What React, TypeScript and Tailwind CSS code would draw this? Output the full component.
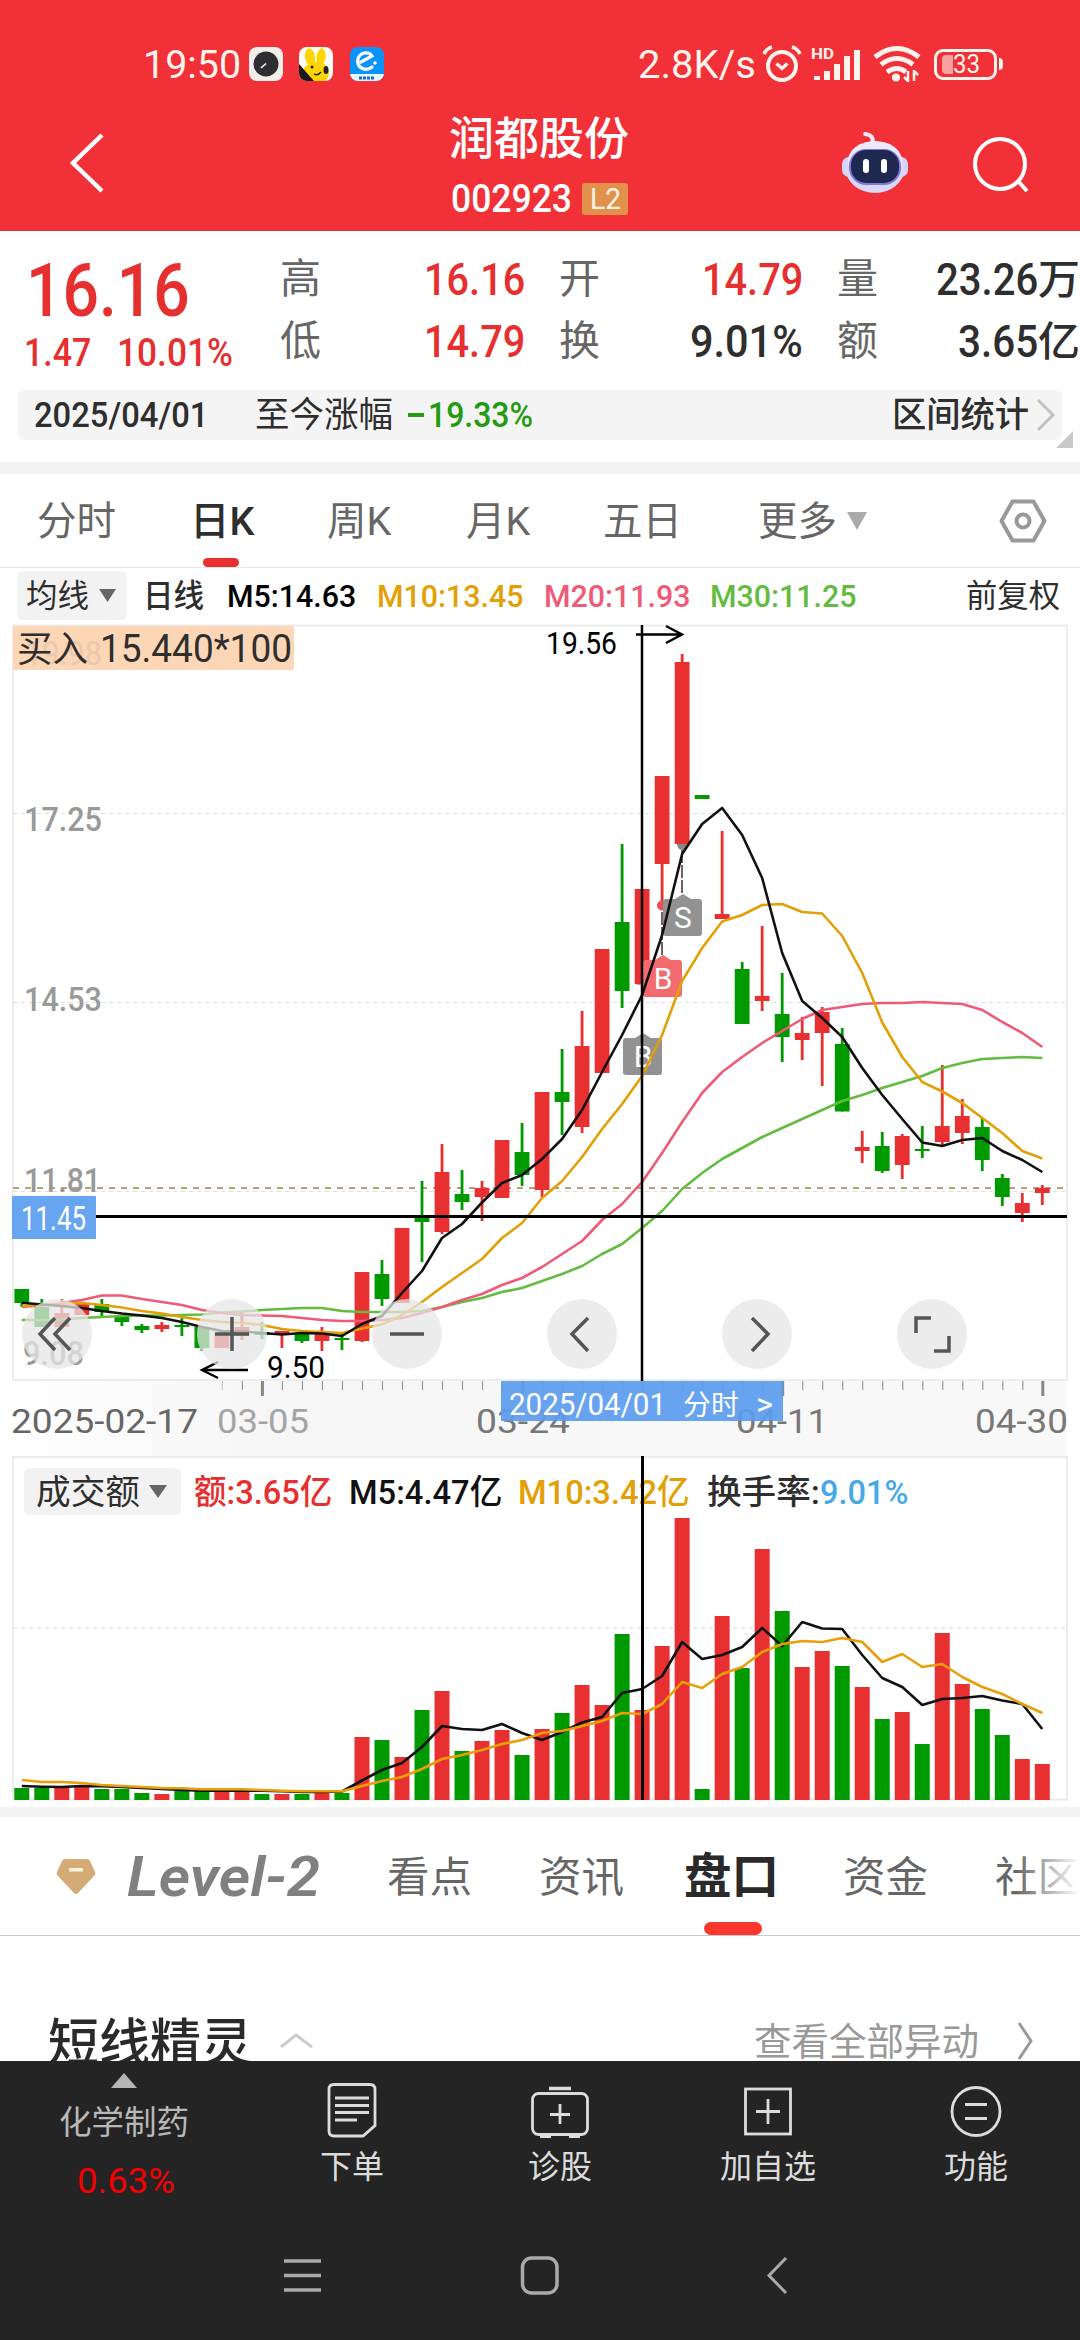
import { useLayoutEffect, useRef, useState, type ReactNode } from 'react';
import clsx from 'clsx';

const RED = '#e93030';
const GREEN = '#009900';

// [direction, high, body top, body bottom, low, turnover bar top]
type Candle = ['r' | 'g', number, number, number, number, number];

const candles: Candle[] = [
  ['g', 1289, 1289, 1303, 1307, 1788],
  ['g', 1299, 1307, 1327, 1327, 1788],
  ['r', 1299, 1313, 1327, 1328, 1787],
  ['r', 1304, 1304, 1315, 1315, 1787],
  ['g', 1299, 1304, 1312, 1317, 1789],
  ['g', 1315, 1316, 1322, 1326, 1789],
  ['g', 1324, 1326, 1330, 1333, 1793],
  ['r', 1322, 1325, 1329, 1332, 1794],
  ['g', 1316, 1325, 1327, 1336, 1791],
  ['g', 1327, 1327, 1348, 1351, 1791],
  ['r', 1333, 1333, 1348, 1348, 1791],
  ['r', 1312, 1327, 1336, 1340, 1791],
  ['g', 1322, 1332, 1335, 1339, 1794],
  ['r', 1331, 1331, 1335, 1348, 1794],
  ['g', 1333, 1333, 1341, 1343, 1794],
  ['r', 1327, 1333, 1341, 1351, 1793],
  ['g', 1333, 1338, 1340, 1350, 1793],
  ['r', 1272, 1272, 1341, 1342, 1737],
  ['g', 1260, 1274, 1299, 1306, 1740],
  ['r', 1228, 1228, 1303, 1303, 1757],
  ['g', 1181, 1217.5, 1222, 1262, 1710],
  ['r', 1144, 1172, 1232, 1234, 1691],
  ['g', 1170, 1194, 1202, 1210, 1751],
  ['r', 1181, 1188, 1197, 1221, 1741],
  ['r', 1140, 1140, 1198, 1198, 1730],
  ['g', 1123, 1152, 1175, 1186, 1755],
  ['r', 1092, 1092, 1190, 1197, 1729],
  ['g', 1049, 1092, 1102, 1135, 1713],
  ['r', 1011, 1046, 1127, 1133, 1685],
  ['r', 949, 949, 1073, 1073, 1705],
  ['g', 844, 922, 991, 1008, 1634],
  ['r', 889, 889, 984, 984, 1710],
  ['r', 776, 776, 864, 905, 1646],
  ['r', 654, 662, 844, 844, 1518],
  ['g', 795, 795, 799, 799, 1789],
  ['r', 831, 914, 919, 919, 1616],
  ['g', 962, 969, 1024, 1024, 1668],
  ['r', 926, 996, 1001, 1011, 1549],
  ['g', 973, 1014, 1037, 1062, 1611],
  ['r', 1017, 1033, 1040, 1060, 1667],
  ['r', 1007, 1012, 1033, 1086, 1651],
  ['g', 1028, 1044, 1111.5, 1111.5, 1666],
  ['r', 1131, 1147, 1151, 1163, 1687],
  ['g', 1132, 1146, 1171, 1173, 1719],
  ['r', 1134, 1136, 1165, 1179, 1712],
  ['g', 1126, 1149, 1151, 1158, 1744],
  ['r', 1065, 1126, 1142, 1146, 1633],
  ['r', 1099, 1116, 1133, 1144, 1684],
  ['g', 1118, 1127, 1160, 1171, 1709],
  ['g', 1174, 1178, 1197, 1206, 1735],
  ['r', 1193, 1203, 1213, 1222, 1759],
  ['r', 1185, 1188, 1193, 1205, 1764],
];

const ma5 = [
  1302.7, 1304.5, 1306, 1308, 1311, 1313.5, 1315.5, 1318, 1322, 1327, 1331, 1331.5, 1333, 1334.5, 1333, 1333.5, 1336, 1324, 1316,
  1293, 1271, 1238, 1224, 1202.5, 1183, 1175, 1159, 1139, 1110, 1072, 1035, 995, 935, 854, 824, 808, 835, 878, 953, 1001, 1018,
  1037, 1068, 1095, 1119, 1142.5, 1146, 1140, 1138, 1151, 1160, 1172,
];
const ma10 = [
  1306, 1305, 1304, 1303, 1305, 1307.5, 1311, 1313.5, 1317, 1320, 1322, 1323, 1325, 1329, 1331, 1332, 1333, 1328.5, 1324.5, 1315,
  1302, 1287, 1273, 1259, 1238, 1223, 1198, 1181, 1157, 1129, 1104, 1076, 1035, 981, 948, 921.5, 915, 905, 904, 912, 913.5, 936,
  973, 1022.5, 1057, 1082, 1091.5, 1103, 1118, 1133, 1151, 1158.5,
];
const ma20 = [
  1307, 1305.5, 1303, 1300, 1295.5, 1295.5, 1299, 1302, 1305, 1310, 1313, 1315, 1315.5, 1316, 1318, 1320, 1321, 1321, 1320, 1318,
  1313, 1307, 1300, 1294, 1285, 1278, 1267, 1254, 1241, 1220, 1204, 1182, 1153, 1122, 1093, 1072, 1057, 1043, 1031, 1019, 1010,
  1007, 1004, 1003, 1003, 1002, 1003, 1004, 1010, 1022, 1033, 1047,
];
const ma30 = [
  1320, 1320, 1319.5, 1318, 1317, 1316, 1315.5, 1315.5, 1315, 1314.5, 1312.5, 1311.5, 1310, 1309, 1308, 1308, 1311, 1312, 1312,
  1312, 1311, 1307, 1302, 1298, 1292, 1288, 1281, 1274, 1266, 1254, 1244, 1228, 1211, 1189, 1173, 1159, 1148, 1137, 1128, 1119,
  1110, 1101, 1095, 1088, 1082, 1076, 1068, 1063, 1059, 1058, 1057, 1058,
];
const turnoverMa5 = [
  1786, 1786.7, 1787, 1786, 1786.3, 1787, 1788, 1789, 1790, 1790.7, 1790.7, 1790.7, 1790.7, 1791.3, 1792, 1792, 1791.5, 1780.5,
  1770, 1763, 1747, 1726, 1729, 1730, 1724, 1733, 1740, 1732, 1722.5, 1717, 1693, 1689, 1676, 1642, 1659, 1655, 1647, 1628, 1646,
  1622, 1628.5, 1629, 1655, 1678, 1687, 1705, 1699, 1698, 1696, 1700.5, 1704, 1729,
];
const turnoverMa10 = [
  1780, 1782, 1782, 1783, 1785, 1786, 1787, 1788, 1788.3, 1789.3, 1789.3, 1789.3, 1790, 1790.7, 1791.3, 1791.3, 1791.3, 1786, 1781,
  1777, 1769, 1759, 1755, 1750, 1744, 1740, 1733, 1731, 1726, 1721, 1713, 1714, 1704, 1682, 1688, 1674, 1667, 1652, 1644, 1641,
  1642, 1638, 1642, 1662, 1654, 1667, 1664, 1677, 1687, 1694, 1704, 1713,
];

const xAt = (i: number) => 21.8 + i * 20.01;
const toPoints = (values: number[]) => values.map((y, i) => `${xAt(i)},${y}`).join(' ');

// Squeezes its text horizontally so that it fills exactly `w` pixels.
function Fit({ w, className, children }: { w: number; className?: string; children: ReactNode }) {
  const ref = useRef<HTMLSpanElement>(null);
  const [scale, setScale] = useState(1);

  useLayoutEffect(() => {
    if (ref.current) setScale(w / ref.current.offsetWidth);
  }, [w]);

  return (
    <span className={clsx('block shrink-0 leading-none', className)} style={{ width: w }}>
      <span ref={ref} className="inline-block origin-left whitespace-nowrap" style={{ transform: `scaleX(${scale})` }}>
        {children}
      </span>
    </span>
  );
}

function StatusBar() {
  return (
    <div className="flex h-[86px] items-end pl-[143px] text-[39px] text-[#fff3ee]">
      <div className="flex h-[44px] items-center">
        <Fit w={98} className="pt-[2px]">
          19:50
        </Fit>
        <svg className="ml-[8px] h-[34px] w-[34px]" viewBox="0 0 34 34">
          <rect width="34" height="34" rx="8" fill="#f1eeec" />
          <circle cx="17" cy="17" r="12.5" fill="#2e2e30" />
          <path d="M12 21l5-4.500" stroke="#fff" strokeWidth="1.600" />
        </svg>
        <svg className="ml-[16px] h-[34px] w-[34px]" viewBox="0 0 34 34">
          <clipPath id="rabbit">
            <rect width="34" height="34" rx="8" />
          </clipPath>
          <g clipPath="url(#rabbit)">
            <rect width="34" height="34" fill="#fdfdf6" />
            <ellipse cx="11" cy="10" rx="5" ry="8.500" fill="#ffd500" transform="rotate(-8 11 10)" />
            <ellipse cx="22" cy="10" rx="4.500" ry="8.500" fill="#ffd500" transform="rotate(8 22 10)" />
            <ellipse cx="17" cy="26" rx="13" ry="11" fill="#ffd500" />
            <path d="M0 17l15 17H0z" fill="#1a1a1a" />
            <circle cx="13" cy="20" r="1.500" fill="#222" />
            <path d="M15 27q4 2 7-2" stroke="#222" strokeWidth="1.500" fill="none" />
            <ellipse cx="27" cy="23" rx="2.500" ry="4" fill="#222" />
          </g>
        </svg>
        <svg className="ml-[17px] h-[34px] w-[34px]" viewBox="0 0 34 34">
          <clipPath id="eleme">
            <rect width="34" height="34" rx="8" />
          </clipPath>
          <g clipPath="url(#eleme)">
            <rect width="34" height="34" fill="#0a93fb" />
            <rect y="27" width="34" height="7" fill="#e9f5ff" />
            <path d="M11 15l11-6c-3-5-12-4-14 3-2 9 8 13 14 8" fill="none" stroke="#fff" strokeWidth="3.200" strokeLinecap="round" />
            <circle cx="25" cy="16" r="1.800" fill="#fff" />
            <path d="M9 31h16" stroke="#0a70d8" strokeWidth="3" strokeDasharray="3 1" />
          </g>
        </svg>
      </div>
      <div className="ml-[254px] flex h-[44px] items-center">
        <Fit w={118} className="pt-[2px]">
          2.8K/s
        </Fit>
        <svg className="ml-[6px] h-[38px] w-[40px]" viewBox="0 0 40 38" fill="none" stroke="currentColor" strokeWidth="4">
          <circle cx="20" cy="21" r="14" />
          <path d="M14.500 18.500l5.500 5 5.500-5" strokeWidth="3.500" />
          <path d="M2 9q2-5 8-7M38 9q-2-5-8-7" strokeWidth="3.500" />
        </svg>
        <svg className="ml-[9px] h-[38px] w-[52px]" viewBox="0 0 52 38" fill="currentColor">
          <text x="0" y="14" fontSize="15" fontWeight="700" textLength="23" lengthAdjust="spacingAndGlyphs">
            HD
          </text>
          <path d="M3 31h6v4H3zM13 26h6v9h-6zM23 19h6v16h-6zM33 11h6v24h-6zM43 5h6v30h-6z" />
        </svg>
        <svg className="ml-[10px] h-[38px] w-[48px]" viewBox="0 0 48 38" fill="none" stroke="currentColor" strokeWidth="4.800">
          <path d="M2 12q22-17 44 0" />
          <path d="M8 19.500q16-12 32 0" />
          <path d="M14 27q10-7 19 0" />
          <circle cx="23" cy="32.500" r="4" fill="currentColor" stroke="none" />
          <path d="M35 37V26M35 36l-4-4M41 25v11M41 26l4 4" strokeWidth="2.500" />
        </svg>
        <div className="ml-[13px] flex h-[31px] w-[63px] items-center rounded-[9px] border-[3px] border-current pl-[5px]">
          <div className="h-[19px] w-[11px] rounded-l-[4px] bg-[#f9a1a1]" />
          <Fit w={27} className="pt-[1px] text-[25px]">
            33
          </Fit>
        </div>
        <div className="ml-[2px] h-[12px] w-[4px] rounded-r-full bg-current" />
      </div>
    </div>
  );
}

function Header() {
  return (
    <header className="h-[231px] border-b border-[#d23a3c] bg-[#f13037] text-white">
      <StatusBar />
      <div className="flex h-[144px]">
        <svg className="mt-[44px] ml-[66px] h-[65px] w-[42px]" viewBox="0 0 42 65" fill="none" stroke="#fff" strokeWidth="4.500">
          <path d="M36 5L7 33l29 28" />
        </svg>
        <div className="ml-[341px] w-[181px]">
          <div className="mt-[31px] text-[45px] leading-[45px] font-medium whitespace-nowrap">润都股份</div>
          <div className="mt-[19px] flex h-[36px] items-center">
            <Fit w={121} className="ml-[2px] pt-[1px] text-[39px] font-medium">
              002923
            </Fit>
            <div className="ml-[10px] flex h-[32px] w-[46px] items-center justify-center rounded-[3px] bg-[#e2914a]">
              <Fit w={31} className="text-[29px] text-[#fff4e8]">
                L2
              </Fit>
            </div>
          </div>
        </div>
        <svg className="mt-[44px] ml-[211px] h-[64px] w-[68px]" viewBox="0 0 68 64">
          <path d="M31 14q3-9-7-10" stroke="#f0e6f6" strokeWidth="4" fill="none" strokeLinecap="round" />
          <rect x="1" y="27" width="66" height="20" rx="7" fill="#d5d3fb" />
          <ellipse cx="34" cy="38" rx="29.500" ry="25" fill="#d9d7fa" />
          <ellipse cx="34" cy="31" rx="27" ry="20" fill="#edeafd" />
          <rect x="8" y="19" width="52" height="36" rx="17" fill="#8079d8" />
          <rect x="10" y="20" width="48" height="33" rx="15" fill="#1e2850" />
          <rect x="22" y="29" width="6" height="14" rx="3" fill="#fff" />
          <rect x="40" y="29" width="6" height="14" rx="3" fill="#fff" />
        </svg>
        <svg className="mt-[47px] ml-[63px] h-[62px] w-[60px]" viewBox="0 0 60 62" fill="none" stroke="#fff" strokeWidth="4">
          <circle cx="28" cy="31" r="25" />
          <path d="M46 48l9 10" />
        </svg>
      </div>
    </header>
  );
}

function Quote() {
  return (
    <section className="h-[231px] pt-[18px] text-[#2e2e2e]">
      <div className="flex h-[124px]">
        <div className="w-[280px] text-[#e5302f]">
          <Fit w={164} className="mt-[5px] ml-[26px] text-[74px] font-medium">
            16.16
          </Fit>
          <div className="mt-[6px] flex">
            <Fit w={67} className="ml-[24px] text-[38px] font-medium">
              1.47
            </Fit>
            <Fit w={116} className="ml-[26px] text-[38px] font-medium">
              10.01%
            </Fit>
          </div>
        </div>
        <div className="flex w-[245px] flex-col">
          <div className="flex h-[63px] items-center justify-between">
            <span className="text-[41px] text-[#666]">高</span>
            <Fit w={101} className="text-[44px] font-medium text-[#e5302f]">
              16.16
            </Fit>
          </div>
          <div className="flex h-[63px] items-center justify-between">
            <span className="text-[41px] text-[#666]">低</span>
            <Fit w={101} className="text-[44px] font-medium text-[#e5302f]">
              14.79
            </Fit>
          </div>
        </div>
        <div className="ml-[34px] flex w-[244px] flex-col">
          <div className="flex h-[63px] items-center justify-between">
            <span className="text-[41px] text-[#666]">开</span>
            <Fit w={101} className="text-[44px] font-medium text-[#e5302f]">
              14.79
            </Fit>
          </div>
          <div className="flex h-[63px] items-center justify-between">
            <span className="text-[41px] text-[#666]">换</span>
            <Fit w={113} className="text-[44px] font-medium">
              9.01%
            </Fit>
          </div>
        </div>
        <div className="ml-[34px] flex w-[243px] flex-col">
          <div className="flex h-[63px] items-center justify-between">
            <span className="text-[41px] text-[#666]">量</span>
            <div className="flex items-center">
              <Fit w={102} className="text-[44px] font-medium">
                23.26
              </Fit>
              <Fit w={42} className="text-[41px] font-medium">
                万
              </Fit>
            </div>
          </div>
          <div className="flex h-[63px] items-center justify-between">
            <span className="text-[41px] text-[#666]">额</span>
            <div className="flex items-center">
              <Fit w={80} className="text-[44px] font-medium">
                3.65
              </Fit>
              <Fit w={42} className="text-[41px] font-medium">
                亿
              </Fit>
            </div>
          </div>
        </div>
      </div>
      <div className="mt-[17px] ml-[18px] flex h-[50px] w-[1044px] items-center rounded-[6px] bg-[#f4f4f4]">
        <Fit w={174} className="ml-[16px] text-[35px] font-medium">
          2025/04/01
        </Fit>
        <Fit w={138} className="ml-[47px] text-[35px]">
          至今涨幅
        </Fit>
        <span className="ml-[15px] h-[4px] w-[16px] bg-[#229a12]" />
        <Fit w={105} className="ml-[4px] text-[35px] font-medium text-[#229a12]">
          19.33%
        </Fit>
        <Fit w={137} className="ml-[359px] text-[35px] font-medium">
          区间统计
        </Fit>
        <svg className="ml-[6px] h-[34px] w-[22px]" viewBox="0 0 22 34" fill="none" stroke="#c2c2c2" strokeWidth="3">
          <path d="M3 2l15 15L3 32" />
        </svg>
      </div>
      <svg className="relative -top-[9px] ml-[1056px] h-[17px] w-[17px]" viewBox="0 0 17 17">
        <path d="M17 0v17H0z" fill="#c8c8c8" />
      </svg>
    </section>
  );
}

function PeriodTabs() {
  return (
    <nav className="flex h-[94px] border-b border-[#e6e6e6] pl-[37px] text-[39.5px] leading-[95px] whitespace-nowrap text-[#666]">
      <span className="w-[153px]">分时</span>
      <span className="flex w-[137px] flex-col font-medium text-[#2e2e2e]">
        <span className="h-[84px]">日K</span>
        <span className="ml-[13px] h-[9px] w-[36px] rounded-full bg-[#e93030]" />
      </span>
      <span className="w-[139px]">周K</span>
      <span className="w-[137px]">月K</span>
      <span className="w-[155px]">五日</span>
      <span className="w-[88px]">更多</span>
      <svg className="mt-[38px] h-[18px] w-[22px]" viewBox="0 0 22 18">
        <path d="M1 0h20L11 18z" fill="#aaa" />
      </svg>
      <svg
        className="mt-[24px] ml-[131px] h-[46px] w-[48px]"
        viewBox="0 0 48 46"
        fill="none"
        stroke="#999"
        strokeWidth="4"
        strokeLinejoin="round"
      >
        <path d="M13.500 3.500h21L45.500 23l-11 19.500h-21L2.500 23z" />
        <circle cx="24" cy="23" r="6.500" />
      </svg>
    </nav>
  );
}

function MaLegend() {
  return (
    <div className="flex h-[54px] items-center pl-[17px] text-[32px] font-medium text-[#2e2e2e]">
      <div className="flex h-[49px] w-[110px] items-center rounded-[6px] bg-[#f2f2f2] pl-[9px] font-normal">
        <Fit w={63} className="pt-[2px]">
          均线
        </Fit>
        <svg className="ml-[10px] h-[13px] w-[17px]" viewBox="0 0 17 13">
          <path d="M0 0h17L8.500 13z" fill="#666" />
        </svg>
      </div>
      <Fit w={61} className="ml-[16px] pt-[1px]">
        日线
      </Fit>
      <Fit w={129} className="ml-[23px] pt-[1px] text-black">
        M5:14.63
      </Fit>
      <Fit w={146} className="ml-[21px] pt-[1px] text-[#e2a006]">
        M10:13.45
      </Fit>
      <Fit w={146} className="ml-[21px] pt-[1px] text-[#ef5a76]">
        M20:11.93
      </Fit>
      <Fit w={146} className="ml-[20px] pt-[1px] text-[#63bb40]">
        M30:11.25
      </Fit>
      <Fit w={94} className="ml-[110px] pt-[2px] font-normal">
        前复权
      </Fit>
    </div>
  );
}

interface LabelProps {
  x: number;
  y: number;
  w: number;
  size?: number;
  fill?: string;
  weight?: number;
  children: string;
}

function Label({ x, y, w, size = 34, fill = '#999', weight = 400, children }: LabelProps) {
  return (
    <text x={x} y={y} fontSize={size} fill={fill} fontWeight={weight} textLength={w} lengthAdjust="spacingAndGlyphs">
      {children}
    </text>
  );
}

function TradeTag({ x, y, fill, children }: { x: number; y: number; fill: string; children: string }) {
  return (
    <g>
      <path
        d={`M${x - 16} ${y}h9l8-5 8 5h8a3 3 0 0 1 3 3v31a3 3 0 0 1-3 3h-33a3 3 0 0 1-3-3v-31a3 3 0 0 1 3-3z`}
        fill={fill}
      />
      <text x={x + 1} y={y + 29} fontSize="30" fill="#fff" textAnchor="middle">
        {children}
      </text>
    </g>
  );
}

const controls = [
  'M33 19L18 35l15 16M48 19L33 35l15 16',
  'M18 35h34M35 18v34',
  'M18 35h34',
  'M41 19L25 35l16 17',
  'M30 19l16 16-16 17',
  'M19 34V19h15M52 37v15H37',
];

function KLineChart() {
  return (
    <div className="relative h-[834px]">
      <svg className="block h-[834px] w-full" viewBox="0 622 1080 834">
        <defs>
          <linearGradient id="axis" x1="0" x2="1" y1="0" y2="0">
            <stop offset="0" stopColor="#fff" />
            <stop offset="0.25" stopColor="#f6f6f6" />
            <stop offset="1" stopColor="#f9f9f9" />
          </linearGradient>
        </defs>
        <rect x="0" y="1381" width="1067" height="75" fill="url(#axis)" />
        <path d="M13 1380V625.500h1054V1380z" fill="none" stroke="#ececec" strokeWidth="2" />
        <path d="M13 813.500h1054M13 1002.500h1054M13 1191.500h1054" stroke="#dedede" strokeWidth="1" strokeDasharray="4 4" />
        <path d="M13 1188h1054" stroke="#b89f7c" strokeWidth="1.800" strokeDasharray="6 6" />

        <rect x="13" y="626" width="281" height="44" rx="2" fill="#fdd6b6" />
        <Label x={25} y={665} w={77} fill="#ecc8ac">
          19.98
        </Label>
        <Label x={17} y={662} w={71} size={36} fill="#2e2e2e">
          买入
        </Label>
        <Label x={100} y={662} w={192} size={39} fill="#2e2e2e">
          15.440*100
        </Label>
        <Label x={24} y={831} w={78} weight={500}>
          17.25
        </Label>
        <Label x={24} y={1011} w={78} weight={500}>
          14.53
        </Label>
        <Label x={24} y={1192} w={77} weight={500}>
          11.81
        </Label>
        <Label x={23} y={1365} w={61} weight={500}>
          9.08
        </Label>

        {candles.map(([dir, high, top, bottom, low], i) => (
          <g key={i} fill={dir === 'r' ? RED : GREEN}>
            <rect x={xAt(i) - 1.4} y={high} width="2.8" height={low - high} />
            <rect x={xAt(i) - 7.4} y={top} width="14.8" height={bottom - top} />
          </g>
        ))}

        <path d="M642 984a6 6 0 0 1-6 0zM677 844a5 6 0 0 0 10 0" fill="#888" />
        <circle cx="662" cy="905.500" r="5" fill="#ef4f50" />
        <path d="M682 850v44M662 912v44" stroke="#4a2b2f" strokeWidth="1.500" strokeDasharray="13 2" />
        <TradeTag x={682} y={899} fill="#929292">
          S
        </TradeTag>
        <TradeTag x={662} y={960} fill="#f36b6e">
          B
        </TradeTag>
        <TradeTag x={642} y={1038} fill="#929292">
          B
        </TradeTag>

        <g fill="none" strokeWidth="2.600" strokeLinejoin="round">
          <polyline points={toPoints(ma30)} stroke="#63bb40" />
          <polyline points={toPoints(ma20)} stroke="#ef5a76" />
          <polyline points={toPoints(ma10)} stroke="#e2a006" />
          <polyline points={toPoints(ma5)} stroke="#111" />
        </g>

        <path d="M13 1216.500h1054" stroke="#000" strokeWidth="3" />
        <path d="M642 625v756" stroke="#000" strokeWidth="2.500" />
        <rect x="12" y="1196" width="84" height="43" rx="1" fill="#68a5f0" />
        <Label x={21} y={1230} w={65} size={33} fill="#fff">
          11.45
        </Label>

        <Label x={546} y={654} w={71} size={31} fill="#000">
          19.56
        </Label>
        <path d="M636 634.500h46M666 626l16 8.500-16 8.500" fill="none" stroke="#000" strokeWidth="2.400" />
        <Label x={267} y={1378} w={58} size={31} fill="#000">
          9.50
        </Label>
        <path d="M248 1370h-46M218 1362l-16 8 16 8" fill="none" stroke="#000" strokeWidth="2.400" />

        {candles.map((_, i) =>
          i < 10 ? null : i % 13 === 12 ? (
            <path key={i} d={`M${xAt(i) + 0.5} 1381v15`} stroke="#888" strokeWidth="3" />
          ) : (
            <path key={i} d={`M${xAt(i) + 0.5} 1381v9`} stroke={i === 10 ? '#ccc' : '#999'} strokeWidth="1.200" />
          ),
        )}
        <Label x={11} y={1433} w={187} fill="#666">
          2025-02-17
        </Label>
        <Label x={217} y={1433} w={92} fill="#a4a4a4">
          03-05
        </Label>
        <Label x={476} y={1433} w={94} fill="#777">
          03-24
        </Label>
        <Label x={736} y={1433} w={92} fill="#777">
          04-11
        </Label>
        <Label x={975} y={1433} w={93} fill="#777">
          04-30
        </Label>
        <rect x="501" y="1381" width="282" height="40" fill="#5c9cef" fillOpacity="0.930" />
        <Label x={509} y={1415} w={157} size={31} fill="#fff">
          2025/04/01
        </Label>
        <Label x={683} y={1415} w={56} size={28} fill="#fff">
          分时
        </Label>
        <Label x={756} y={1415} w={17} size={31} fill="#fff">
          {'>'}
        </Label>
      </svg>
      <div className="absolute top-[677px] left-[22px] flex gap-[105px]">
        {controls.map((d) => (
          <svg key={d} className="h-[70px] w-[70px] rounded-full bg-[#e6e6e6]/75" viewBox="0 0 70 70">
            <path d={d} fill="none" stroke="#555" strokeWidth="3.500" />
          </svg>
        ))}
      </div>
    </div>
  );
}

function TurnoverChart() {
  return (
    <div className="relative h-[351px]">
      <svg className="block h-[351px] w-full" viewBox="0 1456 1080 351">
        <path d="M13 1799.500V1457h1054v342.500z" fill="none" stroke="#ececec" strokeWidth="2" />
        <path d="M13 1628h1054" stroke="#e4e4e4" strokeWidth="1.500" strokeDasharray="4 4" />
        {candles.map(([dir, , , , , top], i) => (
          <rect key={i} x={xAt(i) - 7.5} y={top} width="15" height={1800 - top} fill={dir === 'r' ? RED : GREEN} />
        ))}
        <g fill="none" strokeWidth="2.600" strokeLinejoin="round">
          <polyline points={toPoints(turnoverMa5)} stroke="#111" />
          <polyline points={toPoints(turnoverMa10)} stroke="#e99f0a" />
        </g>
      </svg>
      <div className="absolute top-[12px] left-[24px] flex h-[47px] items-center text-[34px] font-medium text-[#2e2e2e]">
        <div className="flex h-[47px] w-[157px] items-center rounded-[6px] bg-[#f2f2f2] pl-[12px]">
          <Fit w={104} className="font-normal">
            成交额
          </Fit>
          <svg className="ml-[9px] h-[13px] w-[18px]" viewBox="0 0 18 13">
            <path d="M0 0h18L9 13z" fill="#666" />
          </svg>
        </div>
        <Fit w={138} className="ml-[13px] text-[#e5302f]">
          额:3.65亿
        </Fit>
        <Fit w={153} className="ml-[17px] text-[#111]">
          M5:4.47亿
        </Fit>
        <Fit w={172} className="ml-[16px] text-[#e2a006]">
          M10:3.42亿
        </Fit>
        <Fit w={113} className="ml-[17px]">
          换手率:
        </Fit>
        <Fit w={88} className="text-[#45a9e9]">
          9.01%
        </Fit>
      </div>
      <div className="absolute top-0 left-[641px] h-[344px] w-[2.5px] bg-black" />
    </div>
  );
}

function InfoTabs() {
  return (
    <nav className="relative flex h-[119px] overflow-hidden border-b border-[#c8c8c8] text-[42.5px] leading-[121px] whitespace-nowrap text-[#666]">
      <svg className="mt-[42px] ml-[56px] h-[35px] w-[40px]" viewBox="0 0 40 35">
        <path d="M9 0h22q2 0 3 2l5 11q1 2-1 4L22 34q-2 2-4 0L2 17q-2-2-1-4L6 2q1-2 3-2z" fill="#d4ab74" />
        <rect x="13" y="9" width="14" height="3.500" rx="1" fill="#fff4e0" />
      </svg>
      <Fit w={193} className="ml-[31px] text-[55px] !leading-[120px] font-semibold text-[#808080] italic">
        Level-2
      </Fit>
      <span className="ml-[67px] w-[152px]">看点</span>
      <span className="w-[145px]">资讯</span>
      <span className="flex w-[159px] flex-col text-[47.5px] font-bold text-[#2a2a2a]">
        <span className="h-[105px]">盘口</span>
        <span className="ml-[20px] h-[13px] w-[58px] rounded-full bg-[#fa372f]" />
      </span>
      <span className="w-[152px]">资金</span>
      <span>社区</span>
      <div className="absolute top-0 right-0 h-full w-[64px] bg-gradient-to-r from-white/0 to-white" />
    </nav>
  );
}

function BottomItem({ label, className, children }: { label: string; className: string; children: ReactNode }) {
  return (
    <div className={clsx('flex flex-col items-center', className)}>
      <svg
        className="mt-[19px] h-[60px] w-[64px]"
        viewBox="0 0 64 60"
        fill="none"
        stroke="#dcdcdc"
        strokeWidth="2.800"
      >
        {children}
      </svg>
      <span className="mt-[11px] text-[32px] leading-[32px] whitespace-nowrap text-[#dcdcdc]">{label}</span>
    </div>
  );
}

function BottomBar() {
  return (
    <footer className="h-[279px] bg-[#242424]">
      <div className="flex h-[180px]">
        <div className="flex w-[248px] flex-col items-center">
          <svg className="mt-[12px] h-[15px] w-[26px]" viewBox="0 0 26 15">
            <path d="M13 0l13 15H0z" fill="#b5b5b5" />
          </svg>
          <span className="mt-[19px] text-[32.5px] leading-[32px] text-[#b8b8b8]">化学制药</span>
          <Fit w={98} className="mt-[25px] ml-[3px] text-[35px] text-[#f50000]">
            0.63%
          </Fit>
        </div>
        <BottomItem label="下单" className="w-[208px]">
          <path d="M14 4.500h36q5 0 5 5v36L43 56H14q-5 0-5-5V9.500q0-5 5-5z" />
          <path d="M15 18h34M15 25.500h34M15 32.500h34M15 40h22" />
        </BottomItem>
        <BottomItem label="诊股" className="w-[208px]">
          <path d="M21 8.500h22" strokeWidth="3.500" />
          <rect x="4.500" y="13.500" width="55" height="41" rx="6" />
          <path d="M32 24v20M22 34.500h20M12 56.500h11M41 56.500h11" />
        </BottomItem>
        <BottomItem label="加自选" className="w-[208px]">
          <rect x="9.500" y="9" width="45" height="45" />
          <path d="M32 19v25M20 31.500h24" />
        </BottomItem>
        <BottomItem label="功能" className="w-[208px]">
          <circle cx="32" cy="31.500" r="24" />
          <path d="M21 24.500h22M21 38.500h22" />
        </BottomItem>
      </div>
      <div className="flex pl-[282px]">
        <svg className="mt-[12px] h-[44px] w-[42px]" viewBox="0 0 42 44" stroke="#aaa" strokeWidth="3.500">
          <path d="M2 8h37M2 22.500h37M2 37h37" />
        </svg>
        <svg className="mt-[12px] ml-[194px] h-[44px] w-[44px]" viewBox="0 0 44 44" fill="none" stroke="#aaa" strokeWidth="3.500">
          <rect x="4.500" y="5" width="34.500" height="35" rx="9" />
        </svg>
        <svg className="mt-[12px] ml-[200px] h-[44px] w-[30px]" viewBox="0 0 30 44" fill="none" stroke="#aaa" strokeWidth="3">
          <path d="M24 5L7 22.500 24 40" />
        </svg>
      </div>
    </footer>
  );
}

export default function App() {
  return (
    <div className="flex h-[2340px] w-[1080px] flex-col overflow-hidden bg-white font-['Roboto','Noto_Sans_CJK_SC',sans-serif]">
      <Header />
      <Quote />
      <div className="h-[12px] bg-[#f3f3f3]" />
      <PeriodTabs />
      <MaLegend />
      <KLineChart />
      <TurnoverChart />
      <div className="h-[10px] bg-[#f4f4f4]" />
      <InfoTabs />
      <section className="flex h-[125px] overflow-hidden whitespace-nowrap">
        <span className="mt-[81px] ml-[48px] text-[51px] leading-[54px] font-medium text-[#2a2a2a]">短线精灵</span>
        <svg className="mt-[96px] ml-[26px] h-[18px] w-[38px]" viewBox="0 0 38 18" fill="none" stroke="#ccc" strokeWidth="3">
          <path d="M3 15L18 3l16 12" />
        </svg>
        <span className="mt-[85px] ml-[438px] text-[37.500px] leading-[42px] text-[#999]">查看全部异动</span>
        <svg className="mt-[85px] ml-[37px] h-[40px] w-[20px]" viewBox="0 0 20 40" fill="none" stroke="#999" strokeWidth="3">
          <path d="M3 2l12 18L3 38" />
        </svg>
      </section>
      <BottomBar />
    </div>
  );
}
